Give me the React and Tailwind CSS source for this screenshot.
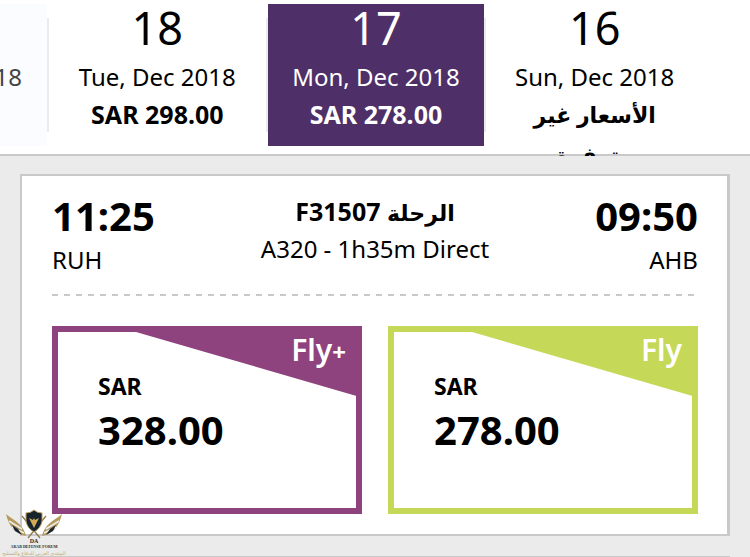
const days = [
  { day: '18', date: 'Tue, Dec 2018', price: 'SAR 298.00' },
  { day: '17', date: 'Mon, Dec 2018', price: 'SAR 278.00', selected: true },
  { day: '16', date: 'Sun, Dec 2018', notice: ['الأسعار غير', 'متوفرة'] },
];

const fares = [
  { name: 'Fly', plus: true, price: '328.00', border: 'border-[#8f437e]', fill: 'fill-[#8f437e]' },
  { name: 'Fly', price: '278.00', border: 'border-[#c6d857]', fill: 'fill-[#c6d857]' },
];

function DayTab({ day, date, price, selected, notice }) {
  return (
    <div className="flex min-w-0 items-start">
      <span className="mt-[14px] h-[114px] w-0.5 shrink-0 bg-[#ebebeb]" />
      <button
        type="button"
        aria-pressed={!!selected}
        className={
          selected
            ? 'flex h-[142px] min-w-0 flex-1 flex-col items-center bg-[#4f2f67] text-white'
            : 'flex h-[142px] min-w-0 flex-1 flex-col items-center text-black'
        }
      >
        <span className="text-[45px] leading-[48px]">{day}</span>
        <span className="mt-1.5 text-2xl leading-[38px] whitespace-nowrap">{date}</span>
        {notice ? (
          <span dir="rtl" className="flex flex-col gap-1 text-[22px] leading-9 font-bold whitespace-nowrap">
            {notice.map((line) => (
              <span key={line}>{line}</span>
            ))}
          </span>
        ) : (
          <span className="text-[25px] leading-9 font-bold whitespace-nowrap">{price}</span>
        )}
      </button>
    </div>
  );
}

function Fare({ name, plus, price, border, fill }) {
  return (
    <button type="button" className={`relative h-[188px] border-[6px] bg-white text-left ${border}`}>
      <svg className="absolute top-0 -right-px h-16 w-[74%]" viewBox="0 0 220 64" preserveAspectRatio="none" aria-hidden="true">
        <path d="M0 0H220V64Z" className={fill} />
      </svg>
      <span className="absolute top-0 right-2.5 text-[30px] leading-9 font-semibold text-white">
        {name}
        {plus && <span className="text-2xl leading-9 font-bold">+</span>}
      </span>
      <span className="flex h-full flex-col pt-9 pl-10 font-bold">
        <span className="text-[23px] leading-9">SAR</span>
        <span className="text-[40px] leading-[52px]">{price}</span>
      </span>
    </button>
  );
}

function ForumMark() {
  return (
    <div className="absolute bottom-0 left-0.5 flex w-16 flex-col items-center text-center">
      <svg width="60" height="32" viewBox="0 0 60 32" aria-hidden="true">
        <path d="M2 7C9 13 19 16 22 29C12 27 5 20 2 7Z" fill="#b59a5d" />
        <path d="M58 7C51 13 41 16 38 29C48 27 55 20 58 7Z" fill="#b59a5d" />
        <path d="M5 14L18 22M8 20L20 26M55 14L42 22M52 20L40 26" stroke="#ececec" strokeWidth="1.5" />
        <path d="M8 18L14 22L18 28L11 24ZM52 18L46 22L42 28L49 24Z" fill="#1c2831" />
        <path d="M18 9L36 31M42 9L24 31" stroke="#8d7a4c" strokeWidth="1.3" />
        <path d="M22 6Q27 6 30 3Q33 6 38 6V14Q37 21 30 25Q23 21 22 14Z" fill="#17232d" stroke="#b59a5d" strokeWidth="1" />
        <path d="M25 11L29 13L30 11L31 13L35 11L32 17L30 21L28 17Z" fill="#d0ad55" />
      </svg>
      <span className="font-['Liberation_Serif',serif] text-[6px] leading-[5px] font-bold text-[#222b32]">DA</span>
      <span className="font-['Liberation_Serif',serif] text-[4px] leading-[5px] font-bold whitespace-nowrap text-[#222b32]">ARAB DEFENSE FORUM</span>
      <span dir="rtl" className="text-[5px] leading-[8px] whitespace-nowrap text-[#c2ab72]">المنتدى العربي للدفاع والتسليح</span>
    </div>
  );
}

export default function App() {
  return (
    <main className="relative h-screen overflow-hidden bg-[#ebebeb] font-['Noto_Sans','DejaVu_Sans',sans-serif] text-black">
      <nav aria-label="Dates" className="grid h-[156px] grid-cols-[47px_1fr_1fr_1fr_47px] overflow-hidden bg-white pt-1 shadow-[inset_0_-2px_0_#c9c9c9]">
        <button type="button" className="flex h-[142px] min-w-0 justify-end overflow-hidden bg-[#fbfcff] pt-[54px] pr-[25px] text-2xl leading-[38px] whitespace-nowrap text-[#444]">
          Wed, Dec 2018
        </button>
        {days.map((d) => (
          <DayTab key={d.day} {...d} />
        ))}
      </nav>

      <section className="mx-5 mt-[18px] border-2 border-r-[3px] border-[#c9c9c9] bg-white pt-[15px] pr-[29px] pb-5 pl-[30px]">
        <div className="flex items-start justify-between">
          <div>
            <p className="text-[40px] leading-[50px] font-bold">11:25</p>
            <p className="text-2xl leading-[38px]">RUH</p>
          </div>
          <div className="pt-0.5 text-center">
            <p dir="rtl" className="text-[25px] leading-9 font-bold">
              <span className="text-[22px]">الرحلة</span> F31507
            </p>
            <p className="text-2xl leading-[38px]">A320 - 1h35m Direct</p>
          </div>
          <div className="text-right">
            <p className="text-[40px] leading-[50px] font-bold">09:50</p>
            <p className="text-2xl leading-[38px]">AHB</p>
          </div>
        </div>
        <div className="mt-[15px] h-0.5 bg-[repeating-linear-gradient(90deg,#c9c9c9_0px,#c9c9c9_6px,transparent_6px,transparent_12px)]" />
        <div className="mt-[30px] grid grid-cols-2 gap-[26px]">
          {fares.map((f) => (
            <Fare key={f.price} {...f} />
          ))}
        </div>
      </section>
      <section className="mx-5 mt-5 h-10 border-2 border-[#c9c9c9] bg-white" />
      <ForumMark />
    </main>
  );
}
